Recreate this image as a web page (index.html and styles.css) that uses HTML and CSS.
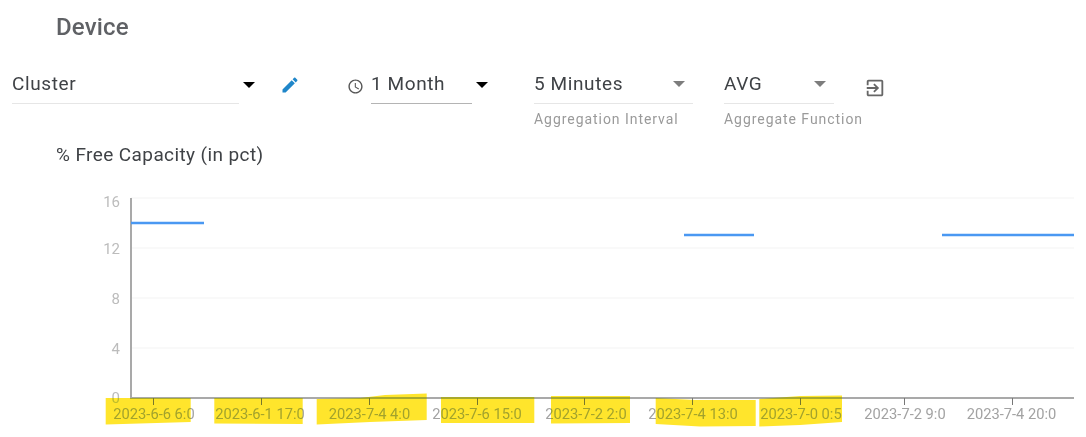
FILE: index.html
```html
<!DOCTYPE html>
<html lang="en">
<head>
<meta charset="utf-8">
<title>Device</title>
<link rel="stylesheet" href="styles.css">
</head>
<body>
<main class="page">
  <h1 class="title">Device</h1>
  <div class="toolbar">
    <div class="field field-cluster">
      <div class="value">Cluster</div>
    </div>
    <span class="caret caret-dark caret-cluster"></span>
    <svg class="icon icon-edit" viewBox="0 0 24 24"><path d="M3 17.25V21h3.75L17.81 9.94l-3.75-3.75L3 17.25zM20.71 7.04c.39-.39.39-1.02 0-1.41l-2.34-2.34c-.39-.39-1.02-.39-1.41 0l-1.83 1.83 3.75 3.75 1.83-1.83z"/></svg>
    <svg class="icon icon-clock" viewBox="0 0 24 24"><path d="M11.99 2C6.47 2 2 6.48 2 12s4.47 10 9.99 10C17.52 22 22 17.52 22 12S17.52 2 11.99 2zM12 20c-4.42 0-8-3.58-8-8s3.58-8 8-8 8 3.58 8 8-3.58 8-8 8zm.5-13H11v6l5.25 3.15.75-1.23-4.5-2.67z"/></svg>
    <div class="field field-range">
      <div class="value">1 Month</div>
    </div>
    <span class="caret caret-dark caret-range"></span>
    <div class="field field-interval">
      <div class="value">5 Minutes<span class="caret caret-grey"></span></div>
      <div class="hint">Aggregation Interval</div>
    </div>
    <div class="field field-function">
      <div class="value">AVG<span class="caret caret-grey"></span></div>
      <div class="hint hint-wide">Aggregate Function</div>
    </div>
    <svg class="icon icon-export" viewBox="0 0 24 24"><path d="M10.09 15.59L11.5 17l5-5-5-5-1.41 1.41L12.67 11H3v2h9.67l-2.58 2.59zM19 3H5c-1.11 0-2 .9-2 2v4h2V5h14v14H5v-4H3v4c0 1.1.89 2 2 2h14c1.1 0 2-.9 2-2V5c0-1.1-.9-2-2-2z"/></svg>
  </div>
  <h2 class="chart-title">% Free Capacity (in pct)</h2>
  <svg class="chart" width="1086" height="270" viewBox="0 167 1086 270">
    <g class="grid">
      <line x1="131" x2="1074" y1="198" y2="198"/>
      <line x1="131" x2="1074" y1="248" y2="248"/>
      <line x1="131" x2="1074" y1="298" y2="298"/>
      <line x1="131" x2="1074" y1="348" y2="348"/>
    </g>
    <g class="axis">
      <line x1="131" x2="131" y1="198" y2="398"/>
      <line x1="130" x2="1074" y1="398" y2="398"/>
    </g>
    <g class="ticks">
      <line x1="153.5" x2="153.5" y1="398" y2="405"/>
      <line x1="261.5" x2="261.5" y1="398" y2="405"/>
      <line x1="369.5" x2="369.5" y1="398" y2="405"/>
      <line x1="477.5" x2="477.5" y1="398" y2="405"/>
      <line x1="584.5" x2="584.5" y1="398" y2="405"/>
      <line x1="692.5" x2="692.5" y1="398" y2="405"/>
      <line x1="800.5" x2="800.5" y1="398" y2="405"/>
      <line x1="904.5" x2="904.5" y1="398" y2="405"/>
      <line x1="1012.5" x2="1012.5" y1="398" y2="405"/>
    </g>
    <g class="series">
      <line x1="131" x2="204" y1="223" y2="223"/>
      <line x1="684" x2="754" y1="235" y2="235"/>
      <line x1="942" x2="1074" y1="235" y2="235"/>
    </g>
    <g class="y-labels">
      <text x="120" y="207">16</text>
      <text x="120" y="254">12</text>
      <text x="120" y="304">8</text>
      <text x="120" y="354">4</text>
      <text x="120" y="403">0</text>
    </g>
    <g class="x-labels">
      <text x="154" y="419">2023-6-6 6:0</text>
      <text x="260" y="419">2023-6-1 17:0</text>
      <text x="369.5" y="419">2023-7-4 4:0</text>
      <text x="477" y="419">2023-7-6 15:0</text>
      <text x="586" y="419">2023-7-2 2:0</text>
      <text x="693" y="419">2023-7-4 13:0</text>
      <text x="801" y="419">2023-7-0 0:5</text>
      <text x="905" y="419">2023-7-2 9:0</text>
      <text x="1011.5" y="419">2023-7-4 20:0</text>
    </g>
    <g class="marks">
      <polygon points="105.7,398 190.7,398 190.7,422 105.7,424.5"/>
      <polygon points="214.3,398 302.7,398 302.7,424 214.3,423.5"/>
      <polygon points="316.7,399 360,398 385,395 426.7,393.5 426.7,420 370,422 316.7,424.5"/>
      <polygon points="441,397 534.3,397 534.3,423 441,423"/>
      <polygon points="551,396 630,396 630,423 551,423.5"/>
      <polygon points="655.7,398 695,400 755.7,400 755.7,426 700,426.5 655.7,424"/>
      <polygon points="759.3,399 800,396 842,395.5 842,422 800,425 759.3,426.5"/>
    </g>
  </svg>
</main>
</body>
</html>
```

FILE: styles.css
```css
html, body {
  margin: 0;
  padding: 0;
  background: #fff;
}

body {
  width: 1086px;
  height: 437px;
  overflow: hidden;
  font-family: Roboto, "Liberation Sans", sans-serif;
}

.page {
  display: flex;
  flex-direction: column;
  filter: blur(0.35px);
}

.title {
  margin: 13px 0 0 56px;
  font-size: 24px;
  line-height: 28px;
  font-weight: 500;
  letter-spacing: 0.15px;
  color: #5f6165;
}

.toolbar {
  display: flex;
  align-items: flex-start;
  height: 76px;
  margin: 27px 0 0 12px;
}

.field {
  flex: none;
}

.value {
  position: relative;
  height: 35px;
  line-height: 32px;
  font-size: 19px;
  letter-spacing: 0.6px;
  color: #3f4246;
  border-bottom: 1px solid #e6e6e6;
}

.hint {
  margin-top: 5px;
  font-size: 14px;
  line-height: 20px;
  letter-spacing: 0.95px;
  color: #9a9a9a;
  white-space: nowrap;
}

.field-cluster {
  width: 227px;
}

.field-range {
  width: 101px;
  margin-left: 7px;
}

.field-range .value {
  border-bottom-color: #b4b4b4;
}

.field-interval {
  width: 159px;
  margin-left: 46px;
}

.field-function {
  width: 110px;
  margin-left: 31px;
}

.caret {
  width: 0;
  height: 0;
  border-left: 6px solid transparent;
  border-right: 6px solid transparent;
  border-top: 6px solid #000;
  flex: none;
}

.caret-dark {
  margin-top: 14px;
}

.caret-cluster,
.caret-range {
  margin-left: 4px;
}

.caret-grey {
  position: absolute;
  top: 13px;
  right: 8px;
  border-top-color: #7d7d7d;
}

.icon {
  flex: none;
  display: block;
}

.icon-edit {
  width: 20px;
  height: 20px;
  margin: 7px 0 0 25px;
  fill: #1f86c9;
}

.icon-clock {
  width: 17px;
  height: 17px;
  margin: 10px 0 0 47px;
  fill: #555;
}

.icon-export {
  width: 22px;
  height: 22px;
  margin: 9px 0 0 30px;
  fill: #666;
}

.chart-title {
  margin: 0 0 0 56px;
  height: 23px;
  font-size: 19px;
  line-height: 22px;
  font-weight: 400;
  letter-spacing: 0.4px;
  color: #3f4246;
}

.chart {
  display: block;
  flex: none;
}

.grid line {
  stroke: #f3f3f3;
  stroke-width: 1;
}

.axis line {
  stroke: #a9a9a9;
  stroke-width: 2;
}

.ticks line {
  stroke: #777;
  stroke-width: 1;
}

.series line {
  stroke: #4a98f2;
  stroke-width: 2.5;
}

.y-labels text {
  font-size: 15px;
  fill: #bcbcbc;
  text-anchor: end;
}

.x-labels text {
  font-size: 14.7px;
  fill: #a2a2a2;
  text-anchor: middle;
}

.marks polygon {
  fill: #ffe52c;
  mix-blend-mode: darken;
}
```
